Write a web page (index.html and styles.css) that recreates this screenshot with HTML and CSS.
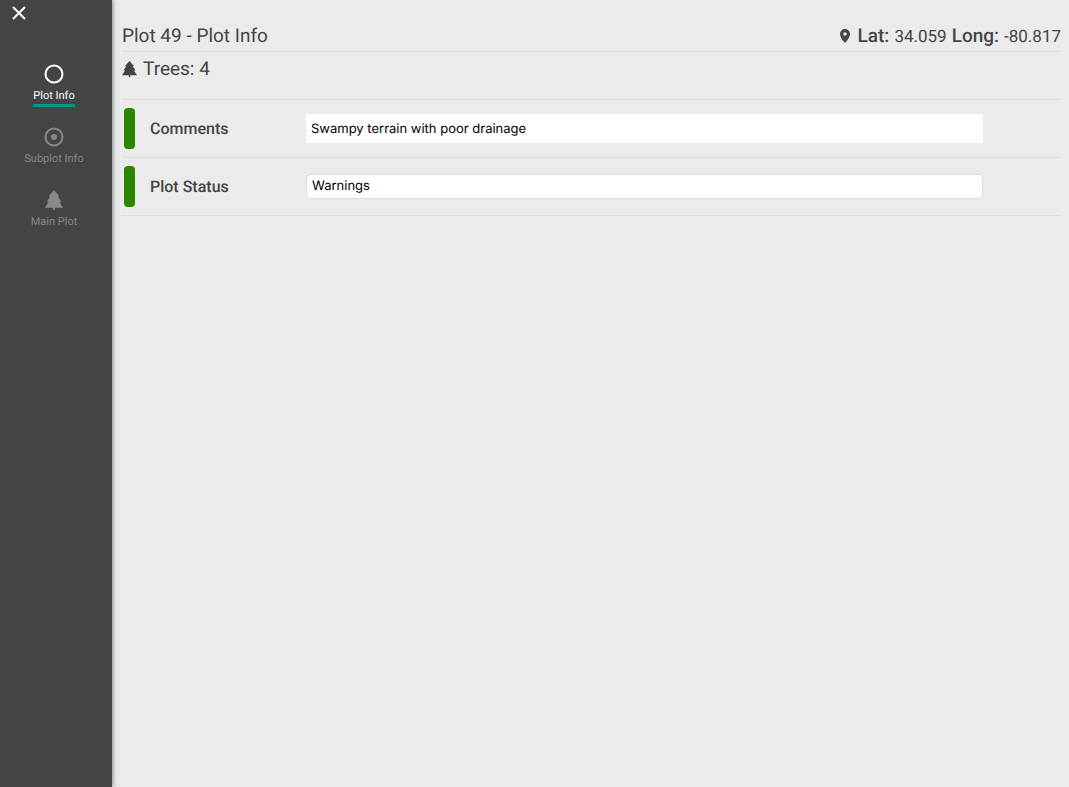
FILE: index.html
```html
<!DOCTYPE html>
<html lang="en">
<head>
    <meta charset="UTF-8">
    <meta name="viewport" content="width=device-width, initial-scale=1.0">
    <title>Plot 49 - Plot Info</title>
    <link rel="stylesheet" href="styles.css">
</head>
<body>
    <aside class="sidebar">
        <button type="button" class="close" aria-label="Close">
            <svg width="14" height="14" viewBox="0 0 14 14"><path d="M1 1L13 13M13 1L1 13"/></svg>
        </button>
        <nav class="menu">
            <a href="#plot-info" class="menu-item active">
                <svg class="ring" width="20" height="20" viewBox="0 0 20 20"><circle cx="10" cy="10" r="8.5"/></svg>
                <span>Plot Info</span>
            </a>
            <a href="#subplot-info" class="menu-item">
                <svg class="ring" width="20" height="20" viewBox="0 0 20 20"><circle cx="10" cy="10" r="8.5"/><circle class="dot" cx="10" cy="10" r="3"/></svg>
                <span>Subplot Info</span>
            </a>
            <a href="#main-plot" class="menu-item">
                <svg class="tree" width="20" height="22" viewBox="0 0 20 22"><path d="M10 0L16 7H14.3L18 13.2H16L20 19.5H11V22H9V19.5H0L4 13.2H2L5.7 7H4Z"/></svg>
                <span>Main Plot</span>
            </a>
        </nav>
    </aside>
    <main class="content" id="plot-info">
        <header class="title-row">
            <h1>Plot 49 - Plot Info</h1>
            <div class="coords">
                <svg width="10" height="14" viewBox="0 0 10 14"><path fill-rule="evenodd" d="M5 0A5 5 0 0 0 0 5C0 8.7 5 14 5 14S10 8.7 10 5A5 5 0 0 0 5 0ZM5 3.2A1.8 1.8 0 1 1 5 6.8A1.8 1.8 0 1 1 5 3.2Z"/></svg>
                <div class="values">
                    <strong>Lat:</strong> <span>34.059</span>
                    <strong>Long:</strong> <span>-80.817</span>
                </div>
            </div>
        </header>
        <div class="tree-count">
            <svg width="15" height="16" viewBox="0 0 20 22" preserveAspectRatio="none"><path d="M10 0L16 7H14.3L18 13.2H16L20 19.5H11V22H9V19.5H0L4 13.2H2L5.7 7H4Z"/></svg>
            <span>Trees: 4</span>
        </div>
        <form>
            <div class="field">
                <label for="comments">Comments</label>
                <input type="text" id="comments" name="comments" value="Swampy terrain with poor drainage">
            </div>
            <div class="field">
                <label for="status">Plot Status</label>
                <select id="status" name="status">
                    <option>Warnings</option>
                </select>
            </div>
        </form>
    </main>
</body>
</html>
```
FILE: styles.css
```css
* {
    box-sizing: border-box;
}

body {
    display: flex;
    min-height: 100vh;
    margin: 0;
    font-family: Roboto, sans-serif;
    text-rendering: geometricPrecision;
    background-color: #ebebeb;
    color: #444;
}

.sidebar {
    flex: none;
    width: 112px;
    background-color: #444;
    box-shadow: 0 0 5px rgba(0, 0, 0, 0.6);
}

.close {
    display: block;
    margin: 6px 0 0 12px;
    padding: 0;
    border: none;
    background: none;
    cursor: pointer;
}

.close svg {
    display: block;
    fill: none;
    stroke: #fff;
    stroke-width: 2;
}

.menu {
    display: flex;
    flex-direction: column;
    align-items: center;
    gap: 20px;
    margin-top: 44px;
    padding-right: 4px;
}

.menu-item {
    display: flex;
    flex-direction: column;
    align-items: center;
    justify-content: flex-end;
    height: 43px;
    font-size: 11px;
    line-height: 17px;
    color: #888;
    text-decoration: none;
}

.menu-item span {
    margin-top: 3px;
    border-bottom: 3px solid transparent;
}

.menu-item.active {
    color: #fff;
}

.menu-item.active span {
    border-bottom-color: #009688;
}

.ring {
    fill: none;
    stroke: currentColor;
    stroke-width: 2;
}

.dot {
    fill: currentColor;
    stroke: none;
}

.tree {
    fill: currentColor;
}

.content {
    flex: 1;
    min-width: 0;
    padding: 20px 8px 0 10px;
}

.title-row {
    display: flex;
    justify-content: space-between;
    align-items: center;
    height: 32px;
    border-bottom: 1px solid #ddd;
}

h1 {
    margin: 0;
    font-size: 19px;
    font-weight: 400;
}

.coords {
    display: flex;
    align-items: center;
    gap: 8px;
    font-size: 17px;
}

.values {
    display: flex;
    align-items: baseline;
    gap: 5px;
}

.coords strong {
    font-size: 19px;
    font-weight: 500;
}

.coords svg,
.tree-count svg {
    fill: #444;
}

.tree-count {
    display: flex;
    align-items: center;
    gap: 6px;
    height: 48px;
    padding-bottom: 14px;
    border-bottom: 1px solid #ddd;
    font-size: 19px;
}

.field {
    display: grid;
    grid-template-columns: 184px 1fr;
    align-items: center;
    height: 58px;
    padding-right: 78px;
    border-bottom: 1px solid #ddd;
}

label {
    display: flex;
    align-items: center;
    gap: 15px;
    padding-left: 2px;
    font-size: 16px;
    font-weight: 500;
}

label::before {
    content: "";
    width: 11px;
    height: 41px;
    border-radius: 4px;
    background-color: #2d8600;
}

input,
select {
    width: 100%;
    font-family: Inter, sans-serif;
    font-size: 13px;
    text-rendering: geometricPrecision;
    color: #000;
    background-color: #fff;
}

input {
    height: 29px;
    padding: 0 5px;
    border: none;
}

select {
    height: 25px;
    padding: 0 5px 2px;
    border: 1px solid #ddd;
    border-radius: 5px;
    appearance: none;
}
```
